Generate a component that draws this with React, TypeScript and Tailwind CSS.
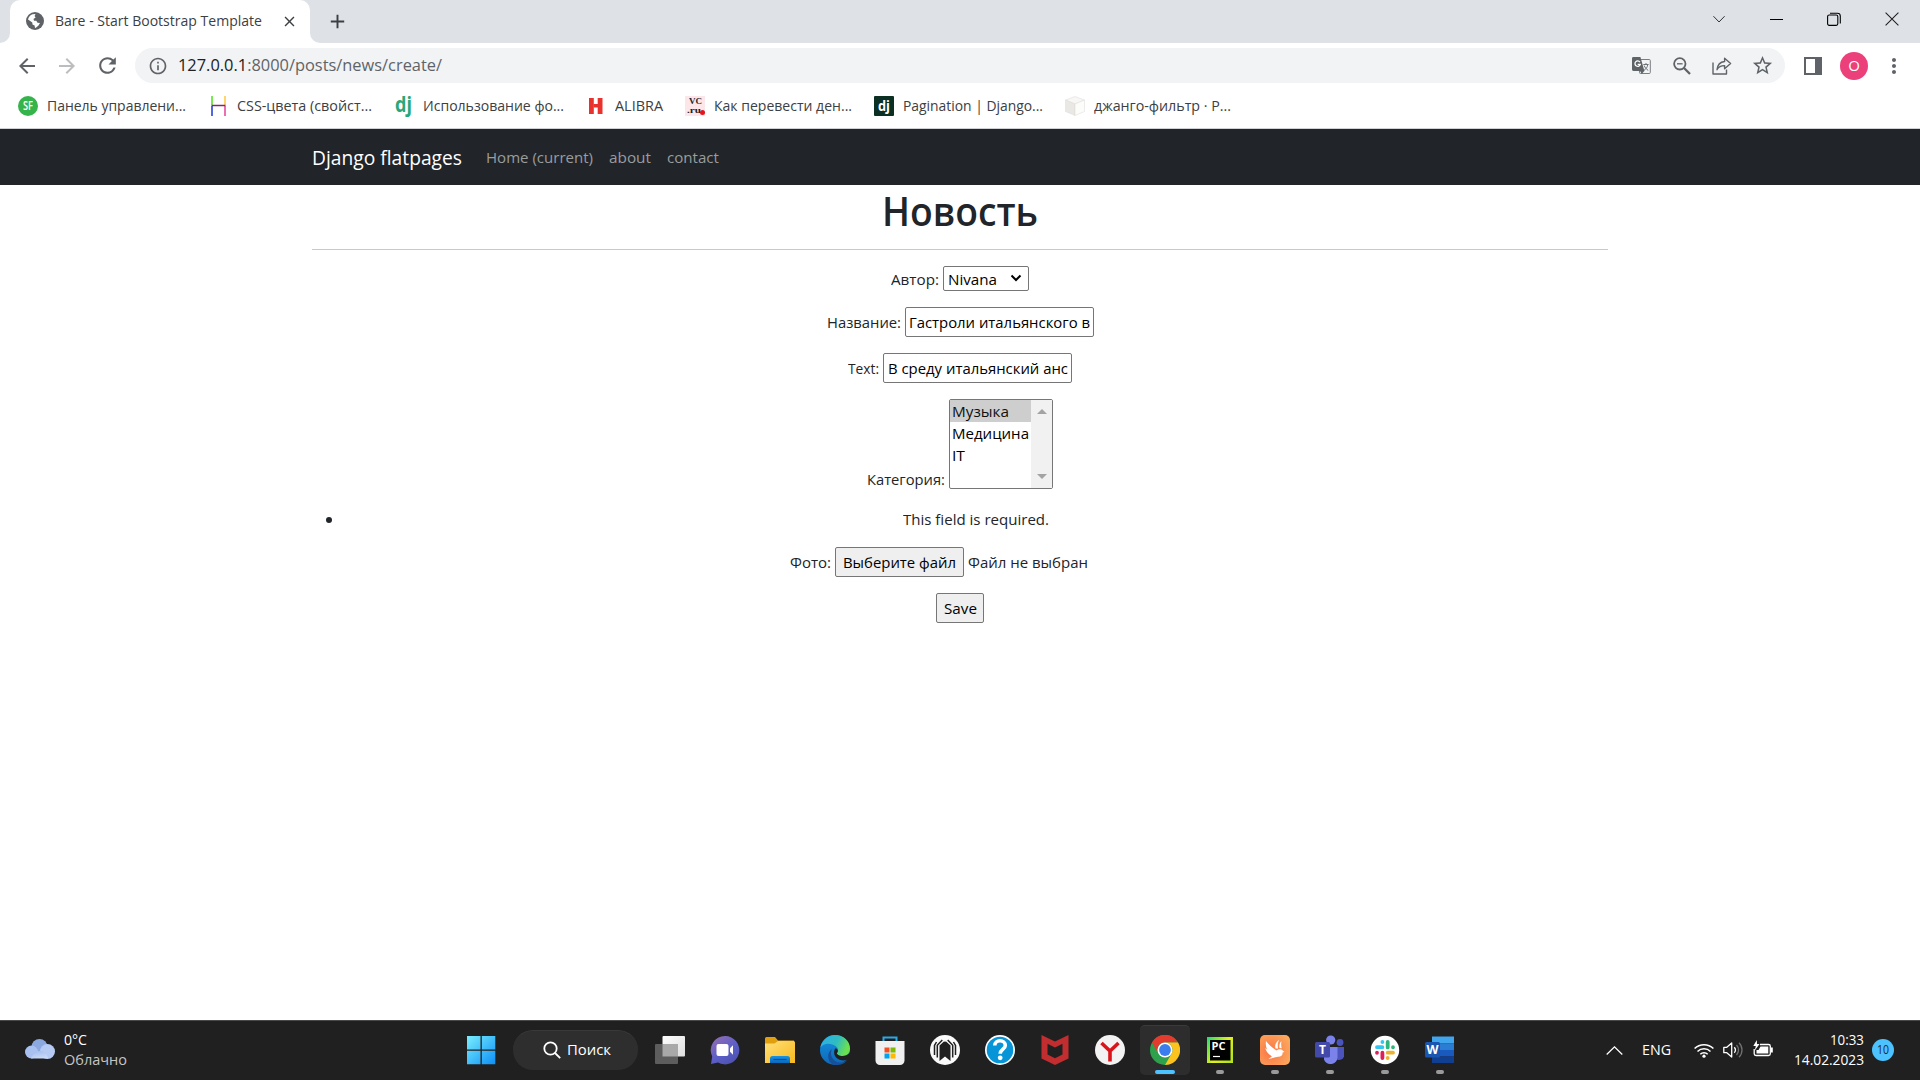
import { useLayoutEffect, useRef, useState, type ReactNode } from "react";
import { MdArrowBack, MdArrowForward, MdRefresh, MdInfoOutline, MdStarBorder, MdClose, MdAdd, MdMoreVert } from "react-icons/md";

/** Text condensed or widened to an exact advance width. */
function Fit({ w, className = "", children }: { w: number; className?: string; children: ReactNode }) {
  const ref = useRef<HTMLSpanElement>(null);
  const [scale, setScale] = useState(1);
  useLayoutEffect(() => {
    if (ref.current && ref.current.offsetWidth) setScale(w / ref.current.getBoundingClientRect().width);
  }, []);
  return (
    <span className={"block shrink-0 whitespace-nowrap " + className} style={{ width: w }}>
      <span ref={ref} className="inline-block origin-left" style={{ transform: `scaleX(${scale})` }}>
        {children}
      </span>
    </span>
  );
}

function TabStrip() {
  return (
    <div className="flex h-[43px] shrink-0 items-end bg-[#dee1e6] text-[#3c4043]">
      <div className="h-[10px] w-[10px] bg-white">
        <div className="h-full w-full rounded-br-[10px] bg-[#dee1e6]" />
      </div>
      <div className="flex h-full w-[300px] items-center rounded-t-[10px] bg-white pb-px pl-4">
        <svg viewBox="0 0 18 18" className="h-[18px] w-[18px]">
          <circle cx="9" cy="9" r="9" fill="#5f6368" />
          <path d="M2 7.5C2.6 5 4.2 3 6.5 2.2L9.5 2 8.6 4 9.6 5.6 7.5 7 8 8.8 10.3 8.7 11.5 10.7 14 11 12.3 13.8 9.8 15.8 9 16 8.6 13.6 6.5 12.4 6.3 10.6Z" fill="#fff" />
          <path d="M11 2.500L14.800 5.200 15.900 8 12.700 7.600 11 5.800 12 4.200Z" fill="#5f6368" />
        </svg>
        <Fit w={207} className="ml-[11px] text-[14.5px]">Bare - Start Bootstrap Template</Fit>
        <MdClose className="ml-[19px] h-[17px] w-[17px]" />
      </div>
      <div className="h-[10px] w-[10px] bg-white">
        <div className="h-full w-full rounded-bl-[10px] bg-[#dee1e6]" />
      </div>
      <MdAdd className="ml-[6px] h-[23px] w-[23px] self-center" />
      <div className="ml-auto flex h-[37px] items-center gap-[44px] self-start pr-[21px]">
        <svg viewBox="0 0 14 14" className="h-[14px] w-[13px]" fill="none" stroke="#222" strokeWidth="1"><path d="M.5 4l6 6.2L12.5 4" /></svg>
        <svg viewBox="0 0 13 14" className="h-[14px] w-[13px]" stroke="#000"><path d="M0 7.5h13" /></svg>
        <svg viewBox="0 0 14 14" className="h-[14px] w-[14px]" fill="none" stroke="#000" strokeWidth="1.1">
          <rect x=".6" y="3" width="10.2" height="10.4" rx="1.6" />
          <path d="M3 1.2h7.4a2.900 2.900 0 0 1 2.900 2.900v7.4" />
        </svg>
        <svg viewBox="0 0 14 14" className="h-[14px] w-[14px]" stroke="#222" strokeWidth="1.1"><path d="M.6.6l12.8 12.8M13.4.6L.6 13.4" /></svg>
      </div>
    </div>
  );
}

function Toolbar() {
  return (
    <div className="flex h-[45px] shrink-0 items-center bg-white pl-[15px] text-[#5f6368]">
      <MdArrowBack className="h-6 w-6" />
      <MdArrowForward className="ml-4 h-6 w-6 text-[#bbbdbf]" />
      <MdRefresh className="ml-4 h-[25px] w-[25px]" />
      <div className="ml-[15px] flex h-[35px] w-[1650px] items-center rounded-full bg-[#f1f3f4] pr-[11px] pl-[13px]">
        <MdInfoOutline className="h-5 w-5" />
        <Fit w={264} className="ml-[10px] text-[16.5px]">
          <span className="text-[#202124]">127.0.0.1</span>:8000/posts/news/create/
        </Fit>
        <svg viewBox="0 0 19 19" className="ml-auto h-[19px] w-[19px]">
          <rect x="7.5" y="3.5" width="10.8" height="14" rx="1" fill="#f1f3f4" stroke="#7a7e82" />
          <path d="M1.4 1h7l4 14H1.4A1.4 1.4 0 0 1 0 13.600V2.400A1.400 1.400 0 0 1 1.400 1z" fill="#5f6368" />
          <path d="M8 15h4.300l-2.500 3z" fill="#5f6368" />
          <path d="M7.900 6.100A2.700 2.700 0 1 0 8.300 8.300H5.700" fill="none" stroke="#fff" strokeWidth="1.300" />
          <path d="M11.300 8.500h5.300M14 7v1.500M12 14.300c2-1 3.300-3 3.700-5.500M12.200 9.500c.8 2.200 2 3.800 4 4.800" fill="none" stroke="#6f7377" />
        </svg>
        <svg viewBox="0 0 18 18" className="ml-[22px] h-[18px] w-[18px]" fill="none" stroke="#5f6368" strokeWidth="1.800">
          <circle cx="6.800" cy="6.800" r="5.700" /><path d="M11 11l6 6" strokeWidth="2.300" /><path d="M4 6.800h5.600" strokeWidth="1.300" />
        </svg>
        <svg viewBox="0 0 20 18" className="ml-[21px] h-[18px] w-[20px]" fill="none" stroke="#5f6368" strokeWidth="1.400" strokeLinejoin="round">
          <path d="M1 5.500V17h13.500v-4.500" />
          <path d="M12.600 1.200l6 5.300-6 5.200V8.600C9 8.500 6.700 9.700 5 12.700 5.500 8 8 5 12.600 4.500z" />
        </svg>
        <MdStarBorder className="ml-[19px] h-[23px] w-[23px]" />
      </div>
      <div className="ml-[19px] h-[18px] w-[18px] border-2 border-r-[7px] border-[#5f6368]" />
      <div className="ml-[18px] flex h-7 w-7 items-center justify-center rounded-full bg-[#ec407a] text-[15px] text-white">O</div>
      <MdMoreVert className="ml-[14px] h-6 w-6" />
    </div>
  );
}

const bookmarks: { w: number; label: string; icon: ReactNode }[] = [
  {
    w: 139, label: "Панель управлени...",
    icon: <div className="flex h-5 w-5 items-center justify-center rounded-full bg-[#34b44a]"><Fit w={10} className="text-[12px] font-semibold text-white">SF</Fit></div>,
  },
  {
    w: 135, label: "CSS-цвета (свойст...",
    icon: (
      <svg viewBox="0 0 20 20" className="h-5 w-5" fill="none" strokeWidth="1.500">
        <path d="M4 0v9" stroke="#4be01d" /><path d="M17 0v9" stroke="#ffc83d" /><path d="M4 10v10" stroke="#1a35d6" /><path d="M17 10v10" stroke="#e83e9a" /><path d="M3.500 9.500h14" stroke="#812a62" />
      </svg>
    ),
  },
  { w: 141, label: "Использование фо...", icon: <div className="flex h-5 w-5 items-center pb-[3px] pl-[1px] text-[21px] font-bold text-[#2aa77a]"><Fit w={17}>dj</Fit></div> },
  {
    w: 48, label: "ALIBRA",
    icon: <svg viewBox="0 0 20 20" className="h-5 w-5" fill="#e8322d"><path d="M3 2h4.800v16H3zM11.700 2h4.800v16h-4.800z" /><path d="M7.500 8h5v3.500h-5z" /></svg>,
  },
  {
    w: 138, label: "Как перевести ден...",
    icon: (
      <div className="relative h-5 w-5 bg-[#fde6ea] pt-px font-['Liberation_Serif'] text-[8.500px] leading-[9px] font-bold text-[#222]">
        <Fit w={13} className="ml-1 h-[9px]">VC</Fit><Fit w={14} className="ml-[2px] h-[9px]">.ru</Fit>
        <div className="absolute right-0 bottom-[1px] h-[5px] w-[5px] rounded-full bg-[#e3141d]" />
      </div>
    ),
  },
  { w: 140, label: "Pagination | Django...", icon: <div className="flex h-5 w-5 items-center justify-center rounded-[1px] bg-[#0c2f24] pb-[2px] text-[14px] font-bold text-white"><Fit w={12}>dj</Fit></div> },
  {
    w: 137, label: "джанго-фильтр · P...",
    icon: (
      <svg viewBox="0 0 20 20" className="h-5 w-5" stroke="#dddbd6" strokeWidth=".5">
        <path d="M.5 4L10 .5 19.500 4 10 8z" fill="#f8f7f5" /><path d="M.5 4L10 8v11.500L.5 15.500z" fill="#e9e8e4" /><path d="M19.500 4L10 8v11.500l9.500-4z" fill="#fcfcfb" />
      </svg>
    ),
  },
];

function Bookmarks() {
  return (
    <div className="flex h-[41px] shrink-0 items-center gap-[21px] border-b border-[#cfd1d4] bg-white pb-[4px] pl-[18px] text-[#3c4043]">
      {bookmarks.map((b) => (
        <div key={b.label} className="flex items-center gap-[9px]">
          {b.icon}
          <Fit w={b.w} className="mr-px text-[14.500px]">{b.label}</Fit>
        </div>
      ))}
    </div>
  );
}

const field = "flex shrink-0 items-center rounded-[2px] border border-[#767676] text-black";

function Page() {
  return (
    <main className="flex min-h-0 flex-1 flex-col bg-white text-[15.200px] text-[#212529]">
      <nav className="flex h-[56px] shrink-0 items-center bg-[#212529] pl-[312px] text-[#9a9c9e]">
        <Fit w={150} className="mt-[2px] text-[19.300px] text-white">Django flatpages</Fit>
        <Fit w={107} className="ml-6">Home (current)</Fit>
        <Fit w={42} className="ml-4">about</Fit>
        <Fit w={52} className="ml-4">contact</Fit>
      </nav>
      <div className="mx-[312px] flex flex-col items-center">
        <h1 className="flex h-[65px] w-full items-center justify-center border-b border-[#c8c9ca] pb-[11px] text-[39px] font-semibold">
          <Fit w={156}>Новость</Fit>
        </h1>
        <label className="mt-4 flex h-[25px] items-center gap-1">
          <Fit w={48} className="mt-px">Автор:</Fit>
          <div className={field + " h-[25px] w-[86px] pl-[4px]"}>
            <Fit w={49} className="mt-px">Nivana</Fit>
            <svg viewBox="0 0 12 8" className="mb-[2px] ml-[13px] h-[8px] w-[12px]" fill="none" stroke="#000" strokeWidth="2"><path d="M1.500 1.500L6 6l4.500-4.500" /></svg>
          </div>
        </label>
        <label className="mt-4 flex items-center gap-1">
          <Fit w={74} className="mt-px">Название:</Fit>
          <div className={field + " h-[30px] w-[189px] pl-[3px]"}><Fit w={181} className="mt-px">Гастроли итальянского в</Fit></div>
        </label>
        <label className="mt-4 flex items-center gap-1">
          <Fit w={31} className="mt-px">Text:</Fit>
          <div className={field + " h-[30px] w-[189px] pl-[4px]"}><Fit w={180} className="mt-px">В среду итальянский анс</Fit></div>
        </label>
        <label className="mt-4 flex items-end gap-1">
          <Fit w={78} className="mb-[-2px]">Категория:</Fit>
          <div className="flex h-[90px] w-[104px] rounded-[2px] border border-[#767676] text-black">
            <div className="w-[81px] leading-[22px]">
              <div className="h-[22px] bg-[#cecece] pl-[2px] text-[#101010]"><Fit w={57}>Музыка</Fit></div>
              <div className="h-[22px] pl-[2px]"><Fit w={77}>Медицина</Fit></div>
              <div className="h-[22px] pl-[2px]"><Fit w={13}>IT</Fit></div>
            </div>
            <div className="flex flex-1 flex-col items-center justify-between bg-[#f1f1f1] py-[9px]">
              <svg viewBox="0 0 10 5" className="h-[5px] w-[10px]" fill="#a3a3a3"><path d="M0 5l5-5 5 5z" /></svg>
              <svg viewBox="0 0 10 5" className="h-[5px] w-[10px]" fill="#a3a3a3"><path d="M0 0l5 5 5-5z" /></svg>
            </div>
          </div>
        </label>
        <div className="mt-[18px] flex h-6 w-full items-center pl-[14px]">
          <div className="mt-[2px] h-[6px] w-[6px] rounded-full bg-[#212529]" />
          <Fit w={146} className="ml-[571px]">This field is required.</Fit>
        </div>
        <div className="mt-4 flex w-[338px] items-center">
          <Fit w={41} className="mt-px ml-[-1px]">Фото:</Fit>
          <div className={field + " ml-1 h-[30px] w-[129px] bg-[#efefef] pl-[7px]"}><Fit w={113} className="mt-px">Выберите файл</Fit></div>
          <Fit w={120} className="mt-px ml-1">Файл не выбран</Fit>
        </div>
        <div className={field + " mt-4 h-[30px] w-[48px] bg-[#efefef] pl-[7px]"}><Fit w={33} className="mt-px">Save</Fit></div>
      </div>
    </main>
  );
}

const svg30 = "h-[30px] w-[30px]";

const apps: { name: string; state?: "open" | "active"; icon: ReactNode }[] = [
  {
    name: "tasks",
    icon: (
      <svg viewBox="0 0 30 30" className={svg30}>
        <defs><linearGradient id="tv" x2="1" y2="1"><stop stopColor="#fff" /><stop offset="1" stopColor="#ddd" /></linearGradient></defs>
        <rect x="7.500" y="1" width="22.500" height="20.500" rx="1" fill="url(#tv)" /><rect x="0" y="9" width="23" height="20" rx="1" fill="#5d5d5d" /><path d="M7.500 9H23v12.500H7.500z" fill="#a9a9a9" />
      </svg>
    ),
  },
  {
    name: "chat",
    icon: (
      <svg viewBox="0 0 30 30" className={svg30}>
        <defs><linearGradient id="ch" x1="0" y1="0" x2="0.700" y2="1"><stop stopColor="#9a6fb0" /><stop offset=".6" stopColor="#5b5fc7" /><stop offset="1" stopColor="#4f52b2" /></linearGradient></defs>
        <path d="M15 1a14.200 14.200 0 1 1-7 26.500L1 29l1.200-7.500A14.200 14.200 0 0 1 15 1z" fill="url(#ch)" /><rect x="6.500" y="9" width="12" height="12" rx="2" fill="#fff" /><path d="M20 13.300l3-3v9.400l-3-3z" fill="#fff" />
      </svg>
    ),
  },
  {
    name: "explorer",
    icon: (
      <svg viewBox="0 0 30 30" className={svg30}>
        <defs><linearGradient id="fo" x2="1" y2="1"><stop stopColor="#ffe07a" /><stop offset="1" stopColor="#f9b91b" /></linearGradient><linearGradient id="fb" x2="0" y2="1"><stop stopColor="#1b93e5" /><stop offset="1" stopColor="#0a68bb" /></linearGradient></defs>
        <path d="M0 3.500A1.500 1.500 0 0 1 1.500 2H10l3 3.500H29V12H0z" fill="#e0a00e" /><path d="M0 8.500h9.500L13 6h15.500A1.500 1.500 0 0 1 30 7.500V28H0z" fill="url(#fo)" /><path d="M5 28v-4.500A2.500 2.500 0 0 1 7.500 21h15a2.500 2.500 0 0 1 2.500 2.500V28z" fill="url(#fb)" /><path d="M8.500 24.500h13" stroke="#07518f" strokeWidth="1.200" />
      </svg>
    ),
  },
  {
    name: "edge",
    icon: (
      <svg viewBox="0 0 30 30" className={svg30}>
        <defs><linearGradient id="e1" x2="1" y2=".3"><stop stopColor="#2faee8" /><stop offset=".6" stopColor="#30bcc0" /><stop offset="1" stopColor="#6be04f" /></linearGradient><linearGradient id="e2" x2="0" y2="1"><stop stopColor="#1693df" /><stop offset="1" stopColor="#0c68b9" /></linearGradient></defs>
        <circle cx="15" cy="15" r="15" fill="url(#e2)" />
        <path d="M.4 12.500C2 5 8 0 15 0c8.500 0 15 6 15 13.500 0 4.500-3 7.500-7.500 7.500-3.500 0-6-1.500-5.500-3 1.800-2 1.200-5.500-1.500-7C10 7.500 3.500 8 .4 12.500z" fill="url(#e1)" />
        <path d="M12 14c-3 6 1 12.500 7.500 13.500 3.500.3 6.500-.8 8.500-3-2.500 3.800-7.500 6-13 5.500C8 29 5.500 18.500 12 14z" fill="#174f99" />
        <path d="M17 18c-.5 1.500 2 3 5.500 3 3.500 0 6-1.500 7.500-3.500v4l-2 2.800c-5 2.500-12 .5-13.500-4.500-1-3.500.5-7 1.500-6.500 2 1 2.500 3 1 4.700z" fill="#202020" />
      </svg>
    ),
  },
  {
    name: "store",
    icon: (
      <svg viewBox="0 0 30 30" className={svg30}>
        <path d="M8.500 7V2.500h13V7" fill="none" stroke="#2ba9e6" strokeWidth="2" /><path d="M.5 6h29v19.500A4.500 4.500 0 0 1 25 30H5a4.500 4.500 0 0 1-4.500-4.500z" fill="#f0f0f0" />
        <path d="M9.500 12.500h5v5h-5z" fill="#f25022" /><path d="M15.500 12.500h5v5h-5z" fill="#7fba00" /><path d="M9.500 18.500h5v5h-5z" fill="#00a4ef" /><path d="M15.500 18.500h5v5h-5z" fill="#ffb900" />
      </svg>
    ),
  },
  {
    name: "tunnel",
    icon: (
      <svg viewBox="0 0 30 30" className={svg30}>
        <circle cx="15" cy="15" r="15" fill="#fafafa" /><path d="M9.500 26V10.500L14.500 6v1h1V6l5 4.500V26L15 21.500z" fill="#202020" />
        <path d="M7.300 22.500V10.200L12.300 5M22.700 22.500V10.200L17.700 5M4.500 20v-9.500L6.500 7M25.500 20v-9.500L23.500 7" fill="none" stroke="#202020" strokeWidth="1.500" />
      </svg>
    ),
  },
  {
    name: "help",
    icon: (
      <svg viewBox="0 0 30 30" className={svg30}>
        <circle cx="15" cy="15" r="15" fill="#fff" /><circle cx="15" cy="15" r="13.300" fill="#0795d8" /><path d="M9.800 10.500C9.800 7.500 12 5.800 15 5.800s5.300 1.800 5.300 4.600c0 3.600-5.100 3.900-5.100 8.300" fill="none" stroke="#fff" strokeWidth="3.600" /><circle cx="15.200" cy="22.800" r="2.400" fill="#fff" />
      </svg>
    ),
  },
  {
    name: "mcafee",
    icon: <svg viewBox="0 0 30 30" className={svg30}><path d="M1.500 0L15 6.500 28.500 0v23.500L15 30 1.500 23.500zM7.500 8.700v10.900L15 23.200l7.500-3.600V8.700L15 12.500z" fill="#c22d2f" fillRule="evenodd" /></svg>,
  },
  {
    name: "yandex",
    icon: <svg viewBox="0 0 30 30" className={svg30}><circle cx="15" cy="15" r="15" fill="#f3f3f3" /><path d="M6.500 8L15 16l8.500-8M15 15.500V26.500" fill="none" stroke="#d9151b" strokeWidth="3.600" /></svg>,
  },
  {
    name: "chrome", state: "active",
    icon: (
      <svg viewBox="0 0 30 30" className={svg30}>
        <circle cx="15" cy="15" r="15" fill="#2da14c" /><path d="M2 7.500A15 15 0 0 1 28 7.500H15A7.500 7.500 0 0 0 8.500 18.800z" fill="#e33b2e" /><path d="M28 7.500A15 15 0 0 1 15 30l6.500-11.200A7.500 7.500 0 0 0 15 7.500z" fill="#fcc31e" />
        <circle cx="15" cy="15" r="7.500" fill="#fff" /><circle cx="15" cy="15" r="5.900" fill="#3b7ded" />
      </svg>
    ),
  },
  {
    name: "pycharm", state: "open",
    icon: (
      <svg viewBox="0 0 30 30" className={svg30}>
        <defs><linearGradient id="pc" x2="1" y2=".7"><stop stopColor="#21d789" /><stop offset=".25" stopColor="#6fe93c" /><stop offset=".6" stopColor="#e4ef1d" /><stop offset="1" stopColor="#b8e61c" /></linearGradient></defs>
        <path d="M2 2h26v26H2z" fill="url(#pc)" /><path d="M5 5h20.500v20.500H5z" fill="#000" /><text x="6.500" y="14.500" fontFamily="Open Sans, sans-serif" fontSize="10.500" fontWeight="700" fill="#fff" textLength="14" lengthAdjust="spacingAndGlyphs">PC</text><path d="M8 21.500h7" stroke="#fff" strokeWidth="1.200" />
      </svg>
    ),
  },
  {
    name: "bird", state: "open",
    icon: (
      <svg viewBox="0 0 30 30" className={svg30}>
        <defs><radialGradient id="sw" cx=".35" cy=".55" r=".75"><stop stopColor="#fb7445" /><stop offset="1" stopColor="#fbab5e" /></radialGradient></defs>
        <rect width="30" height="30" rx="5" fill="url(#sw)" />
        <path d="M6 6c3 4 6 6.500 10.500 9.500 1.500-1.200 3.200-1.700 5-1l3 2.500-2 .5c.5 2.800-1.500 4.500-4.500 4.300l-3.500.7-6 1.500 3.500-2.800C8.500 19.500 6 16.500 5.200 13l2 1.500C5.800 11.500 5.500 9 6 6z" fill="#fff" />
        <path d="M15.500 13.500c-1-3.500.5-6.500 3.500-8.500-1.500 3-1.500 5.500-1 8.500z" fill="#fff" /><path d="M19.500 13c-.5-2.500 0-5 2-7-.5 2.500-.3 5 .2 7.300z" fill="#fff" />
      </svg>
    ),
  },
  {
    name: "teams", state: "open",
    icon: (
      <svg viewBox="0 0 30 30" className={svg30}>
        <circle cx="25" cy="7.500" r="3.400" fill="#4b53bc" /><path d="M20 12h9v9.500a5 5 0 0 1-7 3z" fill="#4b53bc" /><circle cx="15.700" cy="5" r="4.600" fill="#7b83eb" /><path d="M9 12h13.500v10.500a7 7 0 0 1-13.500 2z" fill="#7b83eb" />
        <rect y="7" width="15" height="15.500" rx="1.500" fill="#4349a8" /><text x="4" y="19" fontFamily="Open Sans, sans-serif" fontSize="12" fontWeight="700" fill="#fff">T</text>
      </svg>
    ),
  },
  {
    name: "slack", state: "open",
    icon: (
      <svg viewBox="0 0 30 30" className={svg30} strokeWidth="3.800" strokeLinecap="round">
        <circle cx="15" cy="15" r="14.200" fill="#fff" />
        <path d="M12.400 7v.1M7 12.200h5.400" stroke="#36c5f0" /><path d="M17.700 7v5.400M23 12.200v.1" stroke="#2eb67d" /><path d="M17.700 17.700H23M17.700 23v.1" stroke="#ecb22e" /><path d="M12.400 17.700V23M7 17.700v.1" stroke="#e01e5a" />
      </svg>
    ),
  },
  {
    name: "word", state: "open",
    icon: (
      <svg viewBox="0 0 30 30" className={svg30}>
        <path d="M7 1.500h22v7H7z" fill="#41a5ee" /><path d="M7 8.500h22V15H7z" fill="#2b7cd3" /><path d="M7 15h22v6.500H7z" fill="#185abd" /><path d="M7 21.500h22V28H7z" fill="#103f91" />
        <rect y="7" width="15" height="15.500" rx="1.500" fill="#1a56b0" /><text x="1.500" y="19" fontFamily="Open Sans, sans-serif" fontSize="12" fontWeight="700" fill="#fff" textLength="12" lengthAdjust="spacingAndGlyphs">W</text>
      </svg>
    ),
  },
];

function Taskbar() {
  return (
    <footer className="flex h-[60px] shrink-0 items-center border-t border-[#484848] bg-[#202020] pb-px text-[14.500px] text-white">
      <svg viewBox="0 0 30 20" className="mb-[2px] ml-[25px] h-[20px] w-[30px] shrink-0">
        <defs><linearGradient id="cl" x2=".4" y2="1"><stop stopColor="#9db9ec" /><stop offset="1" stopColor="#c9daf8" /></linearGradient></defs>
        <circle cx="14.500" cy="8" r="8" fill="#8ba9e0" /><circle cx="6.500" cy="13" r="6.500" fill="#a8c1f0" /><circle cx="22.500" cy="12.500" r="7.500" fill="#b6cbf3" /><path d="M6 19.500h17c-1-8-12-12-17 0z" fill="url(#cl)" />
      </svg>
      <div className="mb-px ml-[9px] w-[402px] shrink-0 leading-[20px]">
        <Fit w={23}>0°C</Fit>
        <Fit w={63} className="text-[#c6c6c6]">Облачно</Fit>
      </div>
      <svg viewBox="0 0 30 30" className="h-[30px] w-[30px] shrink-0">
        <defs><linearGradient id="wn" gradientUnits="userSpaceOnUse" x2="30" y2="30"><stop stopColor="#7df1fd" /><stop offset="1" stopColor="#0a8df7" /></linearGradient></defs>
        <path d="M1 1h13.500v13.500H1zM15.800 1h13.500v13.500H15.800zM1 15.800h13.500v13.500H1zM15.800 15.800h13.500v13.500H15.800z" fill="url(#wn)" />
      </svg>
      <div className="ml-[17px] flex h-10 w-[125px] shrink-0 items-center rounded-full border-t border-[#393939] bg-[#2e2e2e] pb-px pl-[30px]">
        <svg viewBox="0 0 18 18" className="h-[18px] w-[18px]" fill="none" stroke="#fff" strokeWidth="1.800"><circle cx="7.500" cy="7.500" r="6.200" /><path d="M12 12l5.200 5.200" /></svg>
        <Fit w={44} className="ml-[6px]">Поиск</Fit>
      </div>
      <div className="ml-[7px] flex shrink-0 gap-[5px]">
        {apps.map((a) => (
          <div key={a.name} className={"relative flex h-[50px] w-[50px] items-center justify-center rounded-[5px] " + (a.state === "active" ? "border-t border-[#3a3a3a] bg-[#2d2d2d] pb-px" : "")}>
            {a.icon}
            {a.state === "active" && <div className="absolute bottom-[1px] h-[4px] w-5 rounded-full bg-[#4cc2ff]" />}
            {a.state === "open" && <div className="absolute bottom-[1px] h-[4px] w-2 rounded-full bg-[#9a9a9a]" />}
          </div>
        ))}
      </div>
      <svg viewBox="0 0 17 9" className="ml-[141px] h-[9px] w-[17px] shrink-0" fill="none" stroke="#fff" strokeWidth="1.300"><path d="M.7 8.500L8.500.9l7.800 7.600" /></svg>
      <Fit w={29} className="ml-[19px]">ENG</Fit>
      <svg viewBox="0 0 20 15" className="ml-[23px] h-[15px] w-5 shrink-0" fill="none" stroke="#fff" strokeWidth="1.500"><path d="M.6 5.500a13.400 13.400 0 0 1 18.800 0M3.500 8.500a9.200 9.200 0 0 1 13 0M6.300 11.300a5.200 5.200 0 0 1 7.400 0" /><circle cx="10" cy="13.200" r="1.600" fill="#fff" stroke="none" /></svg>
      <svg viewBox="0 0 20 18" className="ml-[9px] h-[18px] w-5 shrink-0" fill="none" stroke="#fff" strokeWidth="1.300"><path d="M.8 6.300h3L8.700 2v14l-4.900-4.300h-3z" strokeLinejoin="round" /><path d="M11.300 6.300c1.400 1.600 1.400 3.800 0 5.400" /><path d="M13.500 4c2.700 2.800 2.700 7.200 0 10M16 1.700c4 4 4 10.600 0 14.600" stroke="#707070" /></svg>
      <svg viewBox="0 0 20 17" className="mb-[3px] ml-[10px] h-[17px] w-5 shrink-0"><path d="M7 4.500h8.500A1.800 1.800 0 0 1 17.300 6.300v7.400a1.800 1.800 0 0 1-1.800 1.800H3a1.800 1.800 0 0 1-1.800-1.800V9" fill="none" stroke="#fff" strokeWidth="1.300" /><path d="M7.500 6.500h7.800v7H3.500V10h2z" fill="#fff" /><path d="M18 7.500h1.800v5H18z" fill="#fff" /><path d="M3.800 0L.3 6h2.500L1.800 10.500 6.500 4H4z" fill="#fff" /></svg>
      <div className="mb-px ml-[21px] flex flex-col items-end leading-[20px]">
        <Fit w={34}>10:33</Fit>
        <Fit w={70}>14.02.2023</Fit>
      </div>
      <div className="ml-2 flex h-[22px] w-[22px] shrink-0 items-center justify-center rounded-full bg-[#4cc2ff] text-[12.500px] text-[#1a2a33]"><Fit w={12}>10</Fit></div>
    </footer>
  );
}

export default function App() {
  return (
    <div className="flex h-[1080px] w-[1920px] flex-col overflow-hidden bg-white font-['Open_Sans','Noto_Sans',sans-serif]">
      <TabStrip />
      <Toolbar />
      <Bookmarks />
      <Page />
      <Taskbar />
    </div>
  );
}
